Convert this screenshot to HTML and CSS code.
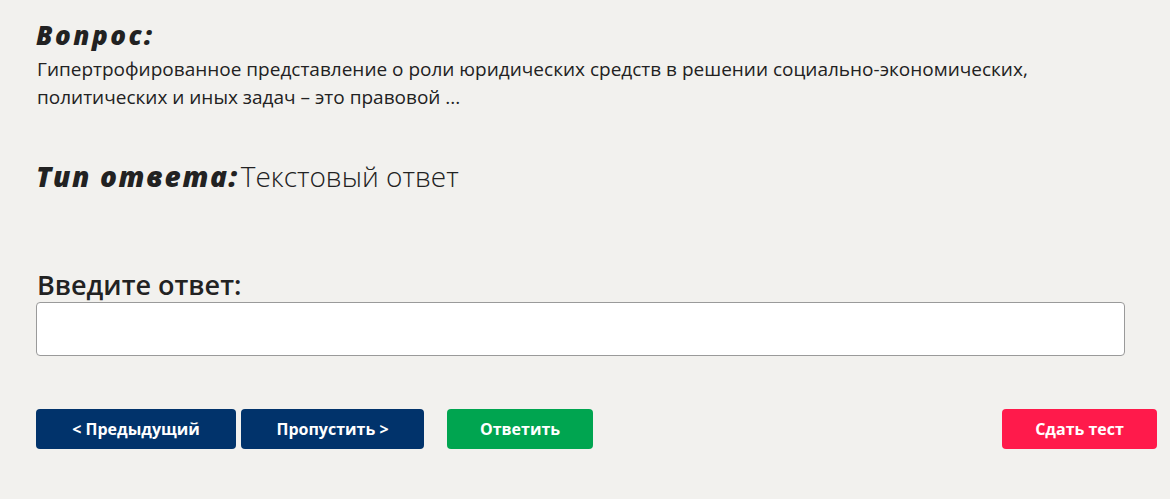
FILE: index.html
```html
<!DOCTYPE html>
<html lang="ru">
<head>
    <meta charset="UTF-8">
    <title>Тестирование</title>
    <link rel="stylesheet" href="styles.css">
</head>
<body>
    <div class="container">
        <!-- Question -->
        <div class="question">
            <h2 class="label">Вопрос:</h2>
            <p class="question-text">Гипертрофированное представление о роли юридических средств в решении социально-экономических, политических и иных задач – это правовой ...</p>
        </div>

        <div class="answer-type">
            <span class="label">Тип ответа:</span><span class="answer-type-value">Текстовый ответ</span>
        </div>

        <!-- Answer -->
        <div class="answer">
            <label class="answer-label" for="answer">Введите ответ:</label>
            <input class="answer-input" type="text" id="answer">
        </div>

        <div class="controls">
            <button class="button button-nav">&lt; Предыдущий</button>
            <button class="button button-nav button-skip">Пропустить &gt;</button>
            <button class="button button-answer">Ответить</button>
            <button class="button button-finish">Сдать тест</button>
        </div>
    </div>
</body>
</html>
```

FILE: styles.css
```css
body {
    font-family: "Open Sans", "Noto Sans", sans-serif;
    margin: 0;
    padding: 0;
    background-color: #f2f1ee;
    color: #222;
}
.container {
    padding: 18px 13px 0 36px;
}
.label {
    font-family: "Open Sans", "Noto Sans", sans-serif;
    font-weight: 800;
    font-style: italic;
    color: #222;
}
.question h2 {
    margin: 0;
    font-size: 26px;
    line-height: 34px;
    letter-spacing: 2.5px;
}
.question-text {
    margin: 3px 0 0 1px;
    font-size: 19px;
    line-height: 28px;
    max-width: 1060px;
}
.answer-type {
    margin-top: 47px;
    font-size: 28px;
    line-height: 36px;
}
.answer-type .label {
    letter-spacing: 1.6px;
}
.answer-type-value {
    font-weight: 300;
    margin-left: 2px;
}
.answer {
    margin-top: 75px;
}
.answer-label {
    display: block;
    font-size: 27px;
    font-weight: 600;
    line-height: 32px;
    margin-left: 1px;
}
.answer-input {
    display: block;
    box-sizing: border-box;
    width: 1089px;
    height: 54px;
    margin-top: 1px;
    border: 1px solid #9a9a9a;
    border-radius: 4px;
    background: #fff;
}
.controls {
    display: flex;
    margin-top: 53px;
}
.button {
    font-family: "Open Sans", sans-serif;
    font-weight: 700;
    font-size: 16px;
    color: #fff;
    height: 40px;
    border: none;
    border-radius: 4px;
    cursor: pointer;
}
.button-nav {
    background-color: #01336b;
    width: 200px;
}
.button-skip {
    width: 183px;
    margin-left: 5px;
}
.button-answer {
    background-color: #00a550;
    width: 146px;
    margin-left: 23px;
}
.button-finish {
    background-color: #ff1a4b;
    width: 155px;
    margin-left: auto;
}
```
